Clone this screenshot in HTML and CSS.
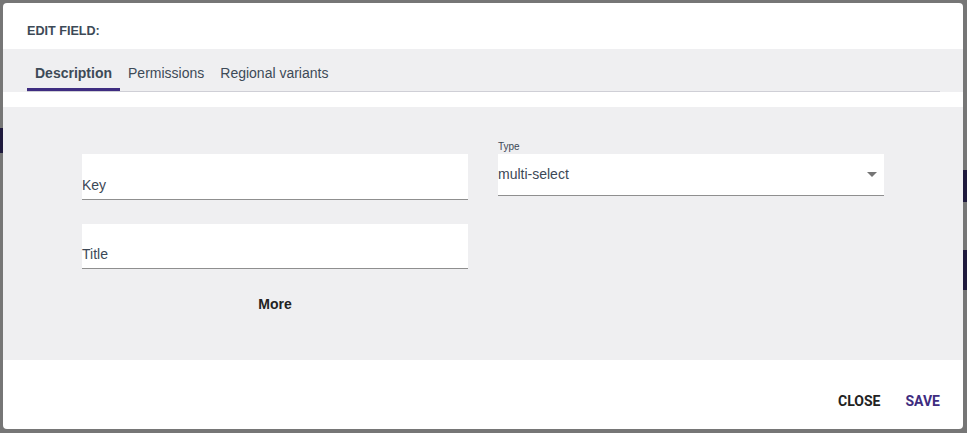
FILE: index.html
```html
<!DOCTYPE html>
<html>
<head>
<meta charset="utf-8">
<link rel="stylesheet" href="styles.css">
</head>
<body>
<div class="backdrop">
  <div class="bg-block bg-left"></div>
  <div class="bg-block bg-right1"></div>
  <div class="bg-block bg-right2"></div>
</div>
<div class="dialog">
  <div class="dialog-header">EDIT FIELD:</div>
  <div class="tabs-band">
    <div class="tabs">
      <div class="tab active">Description</div>
      <div class="tab">Permissions</div>
      <div class="tab">Regional variants</div>
    </div>
  </div>
  <div class="spacer"></div>
  <div class="content">
    <div class="col">
      <div class="field field-key"><span class="field-label">Key</span></div>
      <div class="field field-title"><span class="field-label">Title</span></div>
      <div class="more">More</div>
    </div>
    <div class="col">
      <div class="select-label">Type</div>
      <div class="select">
        <span class="select-value">multi-select</span>
        <svg class="arrow" width="10" height="5" viewBox="0 0 10 5"><path d="M0 0L10 0L5 5Z" fill="#757575"/></svg>
      </div>
    </div>
  </div>
  <div class="footer">
    <div class="btn btn-close">CLOSE</div>
    <div class="btn btn-save">SAVE</div>
  </div>
</div>
</body>
</html>
```

FILE: styles.css
```css
html, body {
  margin: 0;
  padding: 0;
}
body {
  background: #767676;
  width: 967px;
  height: 433px;
  overflow: hidden;
  position: relative;
  font-family: "Liberation Sans", Arial, sans-serif;
}
.backdrop {
  position: absolute;
  inset: 0;
}
.bg-block {
  position: absolute;
  background: #1f1a3d;
}
.bg-left { left: 0; top: 128px; width: 3px; height: 25px; }
.bg-right1 { right: 0; top: 170px; width: 4px; height: 32px; }
.bg-right2 { right: 0; top: 250px; width: 4px; height: 40px; }

.dialog {
  position: absolute;
  left: 3px;
  top: 3px;
  width: 960px;
  height: 426px;
  background: #ffffff;
  border-radius: 4px;
  display: flex;
  flex-direction: column;
  overflow: hidden;
}
.dialog-header {
  height: 46px;
  box-sizing: border-box;
  padding: 20px 24px 0;
  font-size: 12.6px;
  font-weight: 700;
  color: #3d4a57;
  line-height: 16px;
}
.tabs-band {
  background: #efeff1;
  height: 43px;
  padding: 0 23px 0 24px;
}
.tabs {
  display: flex;
  height: 43px;
  border-bottom: 1px solid #cfcfd6;
  box-sizing: border-box;
}
.tab {
  padding: 0 8px;
  font-size: 14px;
  color: #3d4a57;
  line-height: 16px;
  padding-top: 16px;
  box-sizing: border-box;
  height: 42px;
}
.tab.active {
  font-weight: 700;
  border-bottom: 3px solid #3e2c80;
}
.spacer {
  height: 15px;
}
.content {
  background: #efeff1;
  height: 253px;
  padding: 47px 79px 0;
  box-sizing: border-box;
  display: grid;
  grid-template-columns: 1fr 1fr;
  column-gap: 30px;
  align-items: start;
}
.col {
  display: flex;
  flex-direction: column;
}
.field {
  background: #ffffff;
  border-bottom: 1px solid #8f8f8f;
  height: 46px;
  box-sizing: border-box;
  display: flex;
  align-items: flex-end;
  padding-bottom: 6px;
}
.field-title {
  margin-top: 24px;
  height: 45px;
}
.field-label {
  font-size: 14px;
  color: #3c4856;
  line-height: 16px;
}
.more {
  margin-top: 27px;
  text-align: center;
  font-size: 14px;
  font-weight: 700;
  color: #222222;
  line-height: 16px;
}
.select-label {
  margin-top: -13px;
  height: 13px;
  font-size: 10px;
  color: #3c4856;
  line-height: 12px;
}
.select {
  background: #ffffff;
  border-bottom: 1px solid #8f8f8f;
  height: 42px;
  box-sizing: border-box;
  display: flex;
  align-items: center;
  justify-content: space-between;
  padding: 0 7px 2px 0;
}
.select-value {
  font-size: 14px;
  color: #3c4856;
  line-height: 16px;
}
.arrow {
  display: block;
  margin-top: 2px;
}
.footer {
  flex: 1;
  display: flex;
  justify-content: flex-end;
  align-items: flex-start;
  padding: 29px 15px 0 0;
  gap: 10px;
  font-family: Roboto, "Liberation Sans", sans-serif;
}
.btn {
  font-size: 14px;
  font-weight: 700;
  line-height: 16px;
  padding: 4px 8px;
}
.btn-close { color: #222222; margin-right: -1px; }
.btn-save { color: #3e2c80; }
```
